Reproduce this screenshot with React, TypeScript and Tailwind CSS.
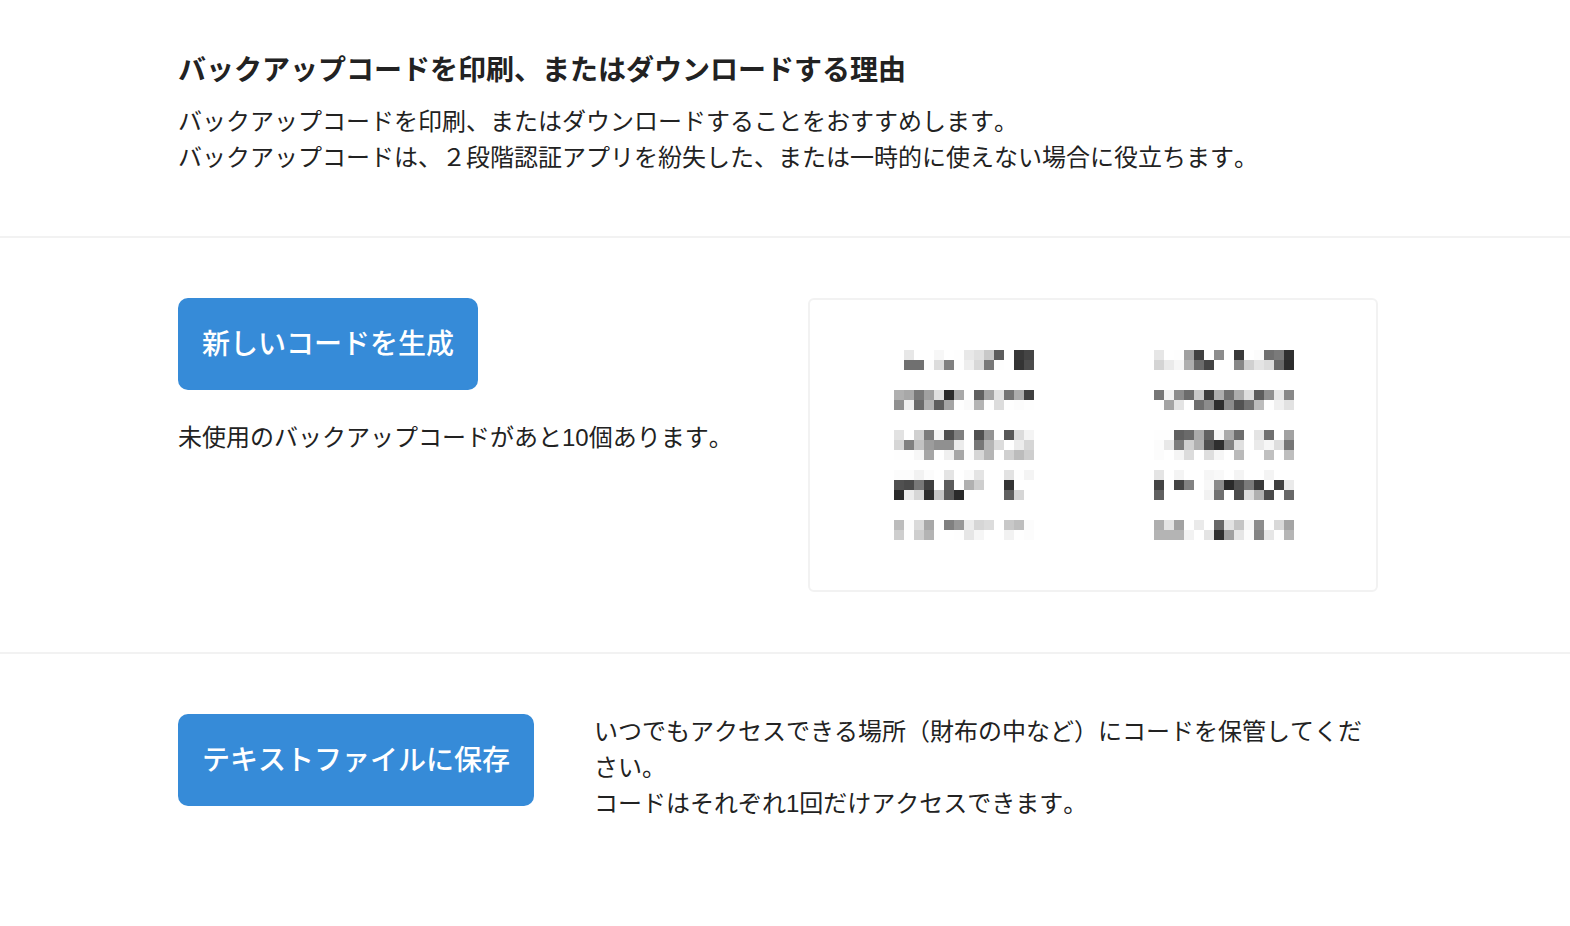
import React from 'react';

// Grey level of every mosaic block, two hex digits each, one string per row
const LEFT_CODES = [
  'ff e7 ff ff f7 ff fe e8 e0 c8 5c fe 38 44',
  'ff 70 70 fc dc 80 fe ee d8 78 fe ff 34 4c',
  '',
  '',
  'b0 a8 78 a0 e0 2a a8 fe 60 a4 e2 74 ac 40',
  '90 f0 6a b2 5c a4 fe fa b4 fe dc fe fc fe',
  '',
  '',
  'e2 ff d0 7c f5 50 80 ff 50 94 ff 58 dc f4',
  'd6 80 c2 9c 90 90 ec ff 78 b6 dc ff ec d6',
  'fe fe f7 a6 ff f0 a6 fc d6 b6 ff d0 bc ce',
  '',
  'fc fc f2 fc ff e4 ff fa e4 ff ff e2 fe f4',
  '50 4a 78 40 ff 5c ff b0 ce ff ff 34 ff ff',
  '2a ec d6 2c c6 5a 2a ff ff ff ff 60 d6 ff',
  '',
  '',
  'bc fc da a8 ff 80 98 ec d6 dc ff c8 be fc',
  'ce fe ce b4 ff ff fe e6 f6 ff ff f2 fe fc',
];

const RIGHT_CODES = [
  'e6 ff fe a0 40 fe 8c ff 3a ff fc 70 7a 30',
  'd4 ea f6 ae 6a 44 ff ff 88 d0 e4 dc 68 2c',
  '',
  '',
  '76 f2 8c 6c c8 3c ae 70 ac de 5c 90 e8 88',
  'ff a4 e4 ff 6e 8c 2e 8c 52 72 bc fe f0 e2',
  '',
  '',
  'fe fe 60 6a aa 62 f6 aa 6e ff e4 70 ff a2',
  'fc e8 7c d0 b0 50 2e 84 e0 ff ea f6 de 76',
  'fc ff f5 dc ff de f6 ff ba ff ff c0 ff be',
  '',
  'e4 ff f4 ff ff f6 f9 ff f4 ff ff f4 ff ff',
  '44 ff 44 82 ff f8 8c 2a 50 7a 3a ff 40 ea',
  '60 ff ff ff ff f2 70 ff 4c dc b0 4a ff 68',
  '',
  '',
  'ae e4 a2 ff ea ff 68 e2 c4 f6 8c fe d8 a4',
  'b4 b4 b4 f2 ff e4 30 a0 e6 fc 84 e6 fe b6',
];

const MaskedCodes: React.FC<{ rows: string[] }> = ({ rows }) => (
  <svg width="140" height="190" viewBox="0 0 14 19" shapeRendering="crispEdges" aria-hidden="true">
    {rows.map((row, y) =>
      row.split(' ').filter(Boolean).map((grey, x) => (
        <rect key={`${x}-${y}`} x={x} y={y} width="1" height="1" fill={`#${grey}${grey}${grey}`} />
      ))
    )}
  </svg>
);

const PrimaryButton: React.FC<{ children: React.ReactNode }> = ({ children }) => (
  <button
    type="button"
    className="shrink-0 cursor-pointer rounded-[10px] bg-[#368bd8] px-6 pt-[26px] pb-6 text-[28px] leading-[42px] font-medium text-white"
  >
    {children}
  </button>
);

const App: React.FC = () => {
  return (
    <main className="min-h-screen bg-white font-['Liberation_Sans','Noto_Sans_CJK_JP',sans-serif] text-2xl leading-9 text-[#222222] [font-kerning:none]" lang="ja">
      <section className="border-b-2 border-[#f2f2f2] pt-[50px] pr-48 pb-[60px] pl-[178px]">
        <h1 className="mb-3 text-[28px] leading-[42px] font-bold">
          バックアップコードを印刷、またはダウンロードする理由
        </h1>
        <p>
          バックアップコードを印刷、またはダウンロードすることをおすすめします。
          <br />
          バックアップコードは、２段階認証アプリを紛失した、または一時的に使えない場合に役立ちます。
        </p>
      </section>

      <section className="grid grid-cols-2 gap-[60px] border-b-2 border-[#f2f2f2] py-[60px] pr-48 pl-[178px]">
        <div>
          <PrimaryButton>新しいコードを生成</PrimaryButton>
          <p className="mt-[30px]">未使用のバックアップコードがあと10個あります。</p>
        </div>
        <div className="flex gap-[120px] rounded-md border-2 border-[#f2f2f2] py-[50px] pl-[84px]">
          <MaskedCodes rows={LEFT_CODES} />
          <MaskedCodes rows={RIGHT_CODES} />
        </div>
      </section>

      <section className="flex items-start gap-[60px] py-[60px] pr-48 pl-[178px]">
        <PrimaryButton>テキストファイルに保存</PrimaryButton>
        <p>
          いつでもアクセスできる場所（財布の中など）にコードを保管してください。
          <br />
          コードはそれぞれ1回だけアクセスできます。
        </p>
      </section>
    </main>
  );
};

export default App;
